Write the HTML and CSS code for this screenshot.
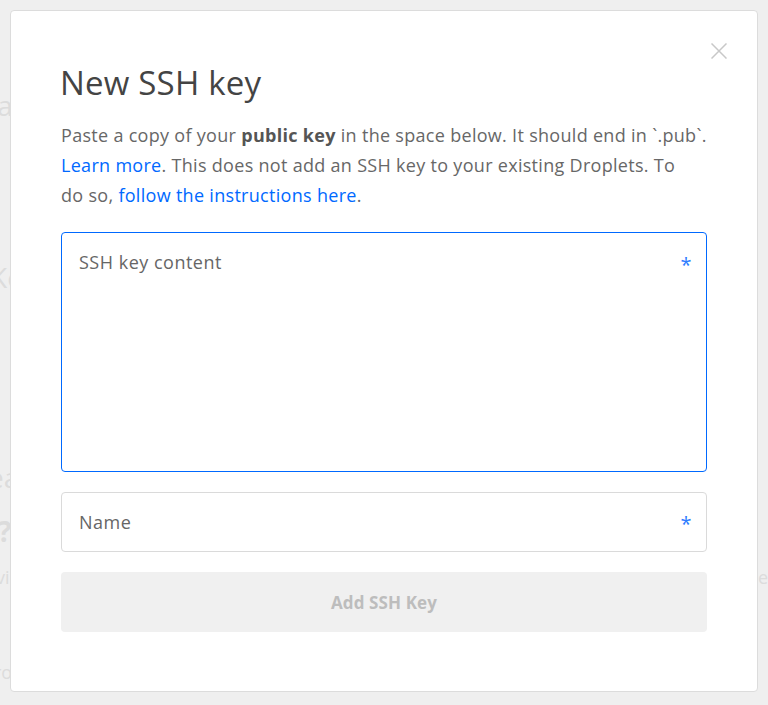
FILE: index.html
```html
<!DOCTYPE html>
<html>
<head>
<meta charset="utf-8">
<link rel="stylesheet" href="styles.css">
</head>
<body>
<div class="page">
  <div class="bg-line bg-h1">Ma</div>
  <div class="bg-line bg-h2">Ke</div>
  <div class="bg-line bg-h3">ea</div>
  <div class="bg-line bg-h4">?</div>
  <div class="bg-line bg-p">vi</div>
  <div class="bg-line bg-p2">ro</div>
  <div class="bg-right">e</div>
</div>
<div class="modal">
  <button class="close" aria-label="Close">
    <svg width="16" height="16" viewBox="0 0 16 16"><path d="M0.5 0.5L15.5 15.5M15.5 0.5L0.5 15.5" stroke="#c8c8c8" stroke-width="1.5" fill="none"/></svg>
  </button>
  <h1 class="title">New SSH key</h1>
  <p class="desc">Paste a copy of your <strong>public key</strong> in the space below. It should end in `.pub`. <a href="#">Learn more</a>. This does not add an SSH key to your existing Droplets. To <span class="nowrap">do so,</span> <a href="#">follow the instructions here</a>.</p>
  <div class="field field-area">
    <span class="placeholder">SSH key content</span>
    <span class="req">*</span>
  </div>
  <div class="field field-name">
    <span class="placeholder">Name</span>
    <span class="req">*</span>
  </div>
  <div class="btn">Add SSH Key</div>
</div>
</body>
</html>
```
FILE: styles.css
```css
html, body {
  margin: 0;
  padding: 0;
  background: #efefef;
  height: 705px;
  overflow: hidden;
  font-family: "Open Sans", "Lato", sans-serif;
}
.page {
  position: relative;
  height: 705px;
  color: #dcdcdc;
}
.bg-line {
  position: absolute;
  left: -14px;
  font-size: 28px;
  line-height: 30px;
}
.bg-h1 { top: 90px; left: -28px; }
.bg-h2 { top: 262px; left: -10px; }
.bg-h3 { top: 462px; left: -12px; }
.bg-h4 { top: 516px; left: -2px; font-weight: bold; }
.bg-p { top: 562px; left: -4px; font-size: 18px; }
.bg-p2 { top: 657px; left: -6px; font-size: 18px; }
.bg-right { position: absolute; top: 562px; left: 758px; font-size: 18px; line-height: 30px; }

.modal {
  position: absolute;
  left: 10px;
  top: 10px;
  height: 682px;
  box-sizing: border-box;
  width: 748px;
  padding: 0 50px;
  background: #fff;
  border: 1px solid #dcdcdc;
  border-radius: 4px;
  display: flex;
  flex-direction: column;
}
.close {
  position: absolute;
  right: 30px;
  top: 32px;
  background: none;
  border: 0;
  padding: 0;
  width: 16px;
  height: 16px;
  cursor: pointer;
}
.close svg { display: block; }
.title {
  margin: 52px 0 0;
  font-size: 33px;
  line-height: 40px;
  font-weight: 400;
  color: #444;
  letter-spacing: 0.2px;
  margin-left: -1px;
}
.desc {
  margin: 17px 0 0;
  font-size: 18px;
  line-height: 30px;
  color: #676767;
  letter-spacing: 0.3px;
}
.nowrap { white-space: nowrap; }
.desc strong { font-weight: 700; color: #555; }
.desc a { color: #0069ff; text-decoration: none; }
.field {
  box-sizing: border-box;
  border: 1px solid #dadada;
  border-radius: 4px;
  display: flex;
  justify-content: space-between;
  padding: 0 14px 0 17px;
  font-size: 18px;
  letter-spacing: 0.5px;
  color: #666;
}
.field-area {
  margin-top: 22px;
  height: 240px;
  border-color: #0069ff;
  padding-top: 17px;
  align-items: flex-start;
}
.field-name {
  margin-top: 20px;
  height: 60px;
  align-items: center;
}
.placeholder { line-height: 24px; }
.req { color: #2d7dff; font-size: 20px; line-height: 24px; margin-top: 3px; }
.field-name .req { margin-top: 4px; }
.btn {
  margin-top: 20px;
  height: 60px;
  border-radius: 4px;
  background: #f0f0f0;
  color: #bdbdbd;
  font-weight: 700;
  font-size: 17px;
  letter-spacing: 0.1px;
  display: flex;
  align-items: center;
  justify-content: center;
}
```
